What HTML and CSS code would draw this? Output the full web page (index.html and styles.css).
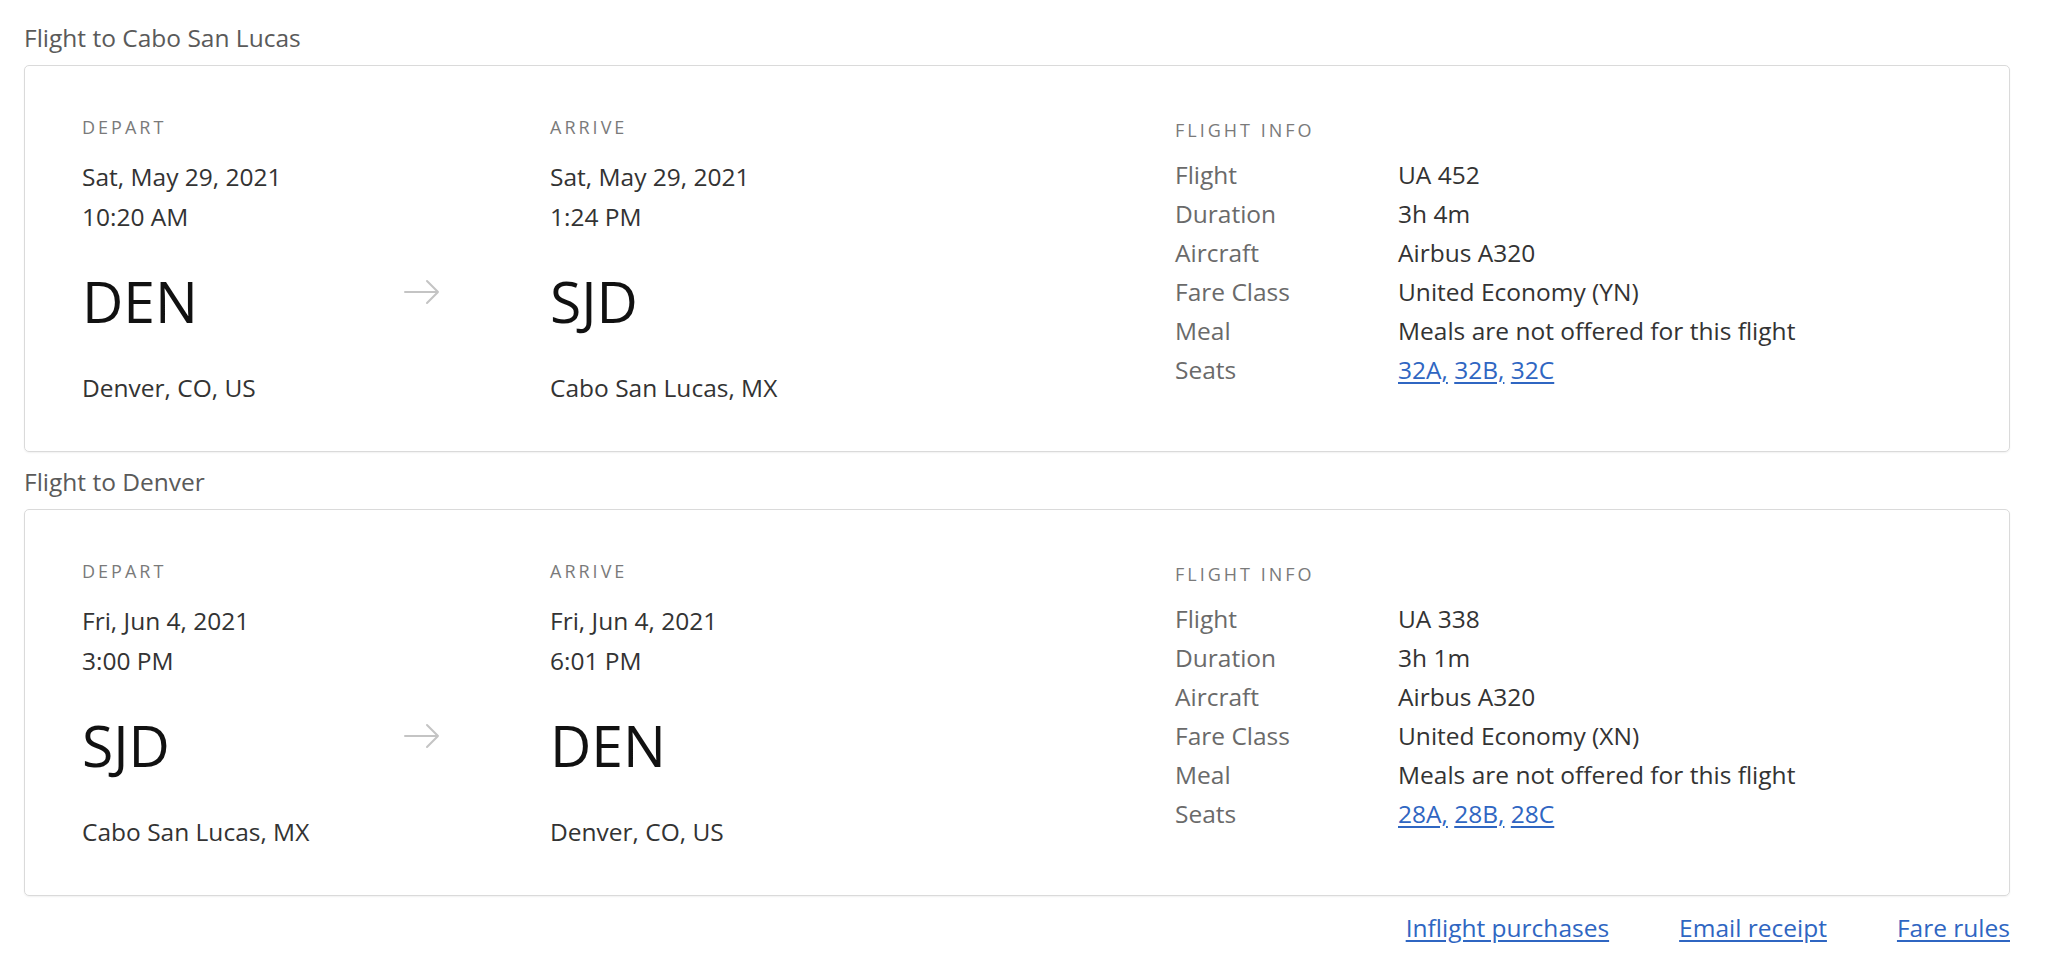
FILE: index.html
```html
<!DOCTYPE html>
<html lang="en">
<head>
<meta charset="utf-8">
<title>Trip details</title>
<link rel="stylesheet" href="styles.css">
</head>
<body>
<main class="page">
  <section class="segment">
    <h2 class="segment-title">Flight to Cabo San Lucas</h2>
    <div class="card">
      <div class="leg">
        <div class="label">DEPART</div>
        <div class="line">Sat, May 29, 2021</div>
        <div class="line">10:20 AM</div>
        <div class="code">DEN</div>
        <div class="city">Denver, CO, US</div>
      </div>
      <div class="arrow-col">
        <svg class="arrow" width="36" height="26" viewBox="0 0 36 26" aria-hidden="true"><path d="M1 13H34M23 2L34 13L23 24" fill="none" stroke="#c4c4c4" stroke-width="2" stroke-linecap="round" stroke-linejoin="round"/></svg>
      </div>
      <div class="leg leg-arrive">
        <div class="label">ARRIVE</div>
        <div class="line">Sat, May 29, 2021</div>
        <div class="line">1:24 PM</div>
        <div class="code">SJD</div>
        <div class="city">Cabo San Lucas, MX</div>
      </div>
      <div class="info">
        <div class="label info-label">FLIGHT INFO</div>
        <dl class="info-grid">
          <dt>Flight</dt><dd>UA 452</dd>
          <dt>Duration</dt><dd>3h 4m</dd>
          <dt>Aircraft</dt><dd>Airbus A320</dd>
          <dt>Fare Class</dt><dd>United Economy (YN)</dd>
          <dt>Meal</dt><dd>Meals are not offered for this flight</dd>
          <dt>Seats</dt><dd><a href="#">32A,</a> <a href="#">32B,</a> <a href="#">32C</a></dd>
        </dl>
      </div>
    </div>
  </section>

  <section class="segment">
    <h2 class="segment-title">Flight to Denver</h2>
    <div class="card">
      <div class="leg">
        <div class="label">DEPART</div>
        <div class="line">Fri, Jun 4, 2021</div>
        <div class="line">3:00 PM</div>
        <div class="code">SJD</div>
        <div class="city">Cabo San Lucas, MX</div>
      </div>
      <div class="arrow-col">
        <svg class="arrow" width="36" height="26" viewBox="0 0 36 26" aria-hidden="true"><path d="M1 13H34M23 2L34 13L23 24" fill="none" stroke="#c4c4c4" stroke-width="2" stroke-linecap="round" stroke-linejoin="round"/></svg>
      </div>
      <div class="leg leg-arrive">
        <div class="label">ARRIVE</div>
        <div class="line">Fri, Jun 4, 2021</div>
        <div class="line">6:01 PM</div>
        <div class="code">DEN</div>
        <div class="city">Denver, CO, US</div>
      </div>
      <div class="info">
        <div class="label info-label">FLIGHT INFO</div>
        <dl class="info-grid">
          <dt>Flight</dt><dd>UA 338</dd>
          <dt>Duration</dt><dd>3h 1m</dd>
          <dt>Aircraft</dt><dd>Airbus A320</dd>
          <dt>Fare Class</dt><dd>United Economy (XN)</dd>
          <dt>Meal</dt><dd>Meals are not offered for this flight</dd>
          <dt>Seats</dt><dd><a href="#">28A,</a> <a href="#">28B,</a> <a href="#">28C</a></dd>
        </dl>
      </div>
    </div>
  </section>

  <nav class="actions">
    <a href="#">Inflight purchases</a>
    <a href="#">Email receipt</a>
    <a href="#">Fare rules</a>
  </nav>
</main>
</body>
</html>
```
FILE: styles.css
```css
* { box-sizing: border-box; }

html, body {
  margin: 0;
  padding: 0;
  background: #ffffff;
}

body {
  font-family: "Open Sans", "Liberation Sans", sans-serif;
  color: #333333;
}

.page {
  padding: 24px 62px 0 24px;
}

.segment + .segment {
  margin-top: 16px;
}

.segment-title {
  margin: 0 0 13px 0;
  font-size: 24.5px;
  line-height: 28px;
  font-weight: 400;
  color: #5a5a5a;
}

.card {
  display: flex;
  height: 387px;
  padding: 49px 0 0 57px;
  border: 1px solid #dadada;
  border-radius: 5px;
  box-shadow: 0 1px 2px rgba(0, 0, 0, 0.06);
}

.leg {
  width: 322px;
  flex: none;
}

.leg-arrive {
  width: 625px;
}

.arrow-col {
  width: 146px;
  flex: none;
  padding-top: 164px;
}

.arrow {
  display: block;
}

.label {
  font-size: 18px;
  line-height: 24px;
  letter-spacing: 3px;
  color: #7a7a7a;
  margin-bottom: 18px;
}

.line {
  font-size: 24.5px;
  line-height: 40px;
  color: #333333;
}

.code {
  margin-top: 32px;
  font-size: 57px;
  line-height: 64px;
  color: #111111;
}

.city {
  margin-top: 35px;
  font-size: 24.5px;
  line-height: 40px;
  color: #333333;
}

.info {
  flex: 1;
  padding-top: 3px;
}

.info-label {
  margin-bottom: 14px;
}

.info-grid {
  display: grid;
  grid-template-columns: 223px 1fr;
  margin: 0;
  font-size: 24.5px;
  line-height: 38.9px;
}

.info-grid dt {
  color: #6a6a6a;
}

.info-grid dd {
  margin: 0;
  color: #333333;
}

a {
  color: #2f66c2;
  text-decoration: underline;
  text-underline-offset: 3px;
}

.actions {
  display: flex;
  justify-content: flex-end;
  gap: 70px;
  margin-top: 16px;
  font-size: 24.5px;
  line-height: 32px;
}
```
